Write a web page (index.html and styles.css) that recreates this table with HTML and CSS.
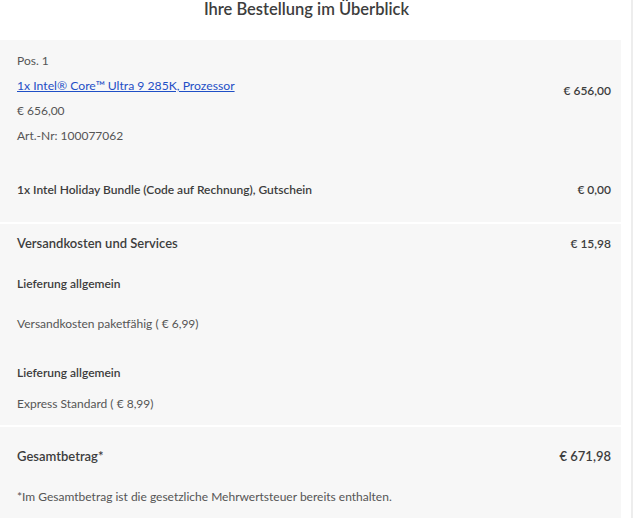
FILE: index.html
```html
<!DOCTYPE html>
<html lang="de">
<head>
<meta charset="utf-8">
<title>Ihre Bestellung im Überblick</title>
<link rel="stylesheet" href="styles.css">
</head>
<body>
<div class="page">
  <main class="panel">
    <h1 class="title">Ihre Bestellung im Überblick</h1>

    <section class="block block-items">
      <div class="item">
        <div class="item-info">
          <div class="line">Pos. 1</div>
          <div class="line"><a class="item-link" href="#">1x Intel® Core™ Ultra 9 285K, Prozessor</a></div>
          <div class="line">€ 656,00</div>
          <div class="line">Art.-Nr: 100077062</div>
        </div>
        <div class="amount item-amount">€ 656,00</div>
      </div>
      <div class="row bundle">
        <div class="strong">1x Intel Holiday Bundle (Code auf Rechnung), Gutschein</div>
        <div class="amount">€ 0,00</div>
      </div>
    </section>

    <section class="block block-shipping">
      <div class="row">
        <div class="heading">Versandkosten und Services</div>
        <div class="amount">€ 15,98</div>
      </div>
      <div class="line strong gap-a">Lieferung allgemein</div>
      <div class="line gap-a">Versandkosten paketfähig ( € 6,99)</div>
      <div class="line strong gap-b">Lieferung allgemein</div>
      <div class="line gap-c">Express Standard ( € 8,99)</div>
    </section>

    <section class="block block-total">
      <div class="row">
        <div class="heading">Gesamtbetrag*</div>
        <div class="amount total">€ 671,98</div>
      </div>
      <div class="line note">*Im Gesamtbetrag ist die gesetzliche Mehrwertsteuer bereits enthalten.</div>
    </section>
  </main>
  <div class="rail"></div>
</div>
</body>
</html>
```

FILE: styles.css
```css
html, body {
  margin: 0;
  padding: 0;
  background: #ffffff;
}

body {
  font-family: Lato, "Open Sans", "Liberation Sans", sans-serif;
  font-size: 12px;
  color: #555555;
}

.page {
  display: flex;
  width: 633px;
  min-height: 518px;
}

.panel {
  width: 621px;
  display: flex;
  flex-direction: column;
  gap: 2px;
}

.rail {
  margin-left: auto;
  width: 2px;
  background: #ededed;
}

.title {
  margin: 0;
  height: 38px;
  padding-right: 8px;
  line-height: 18px;
  font-size: 16.5px;
  font-weight: 600;
  color: #3d3d3d;
  text-align: center;
}

.block {
  background: #f7f7f7;
  padding: 0 10px 0 17px;
  display: flex;
  flex-direction: column;
}

.line {
  line-height: 25px;
}

.item {
  display: flex;
  justify-content: space-between;
  align-items: flex-start;
  padding-top: 8px;
}

.item-amount {
  margin-top: 30px;
}

.item-link {
  color: #1f4fc6;
  text-decoration: underline;
  font-size: 12.2px;
}

.row {
  display: flex;
  justify-content: space-between;
  align-items: center;
  line-height: 25px;
}

.bundle {
  margin-top: 29px;
}

.block-items {
  padding-bottom: 20px;
}

.strong {
  font-weight: 600;
  color: #3d3d3d;
}

.heading {
  font-size: 13px;
  font-weight: 600;
  color: #3d3d3d;
}

.amount {
  font-size: 12px;
  font-weight: 600;
  color: #3d3d3d;
  line-height: 25px;
}

.total {
  font-size: 13px;
}

.block-shipping {
  padding-top: 7px;
  padding-bottom: 9px;
}

.gap-a {
  margin-top: 15px;
}

.gap-b {
  margin-top: 24px;
}

.gap-c {
  margin-top: 6px;
}

.block-total {
  flex: 1;
  padding-top: 17px;
}

.note {
  margin-top: 15px;
}
```
